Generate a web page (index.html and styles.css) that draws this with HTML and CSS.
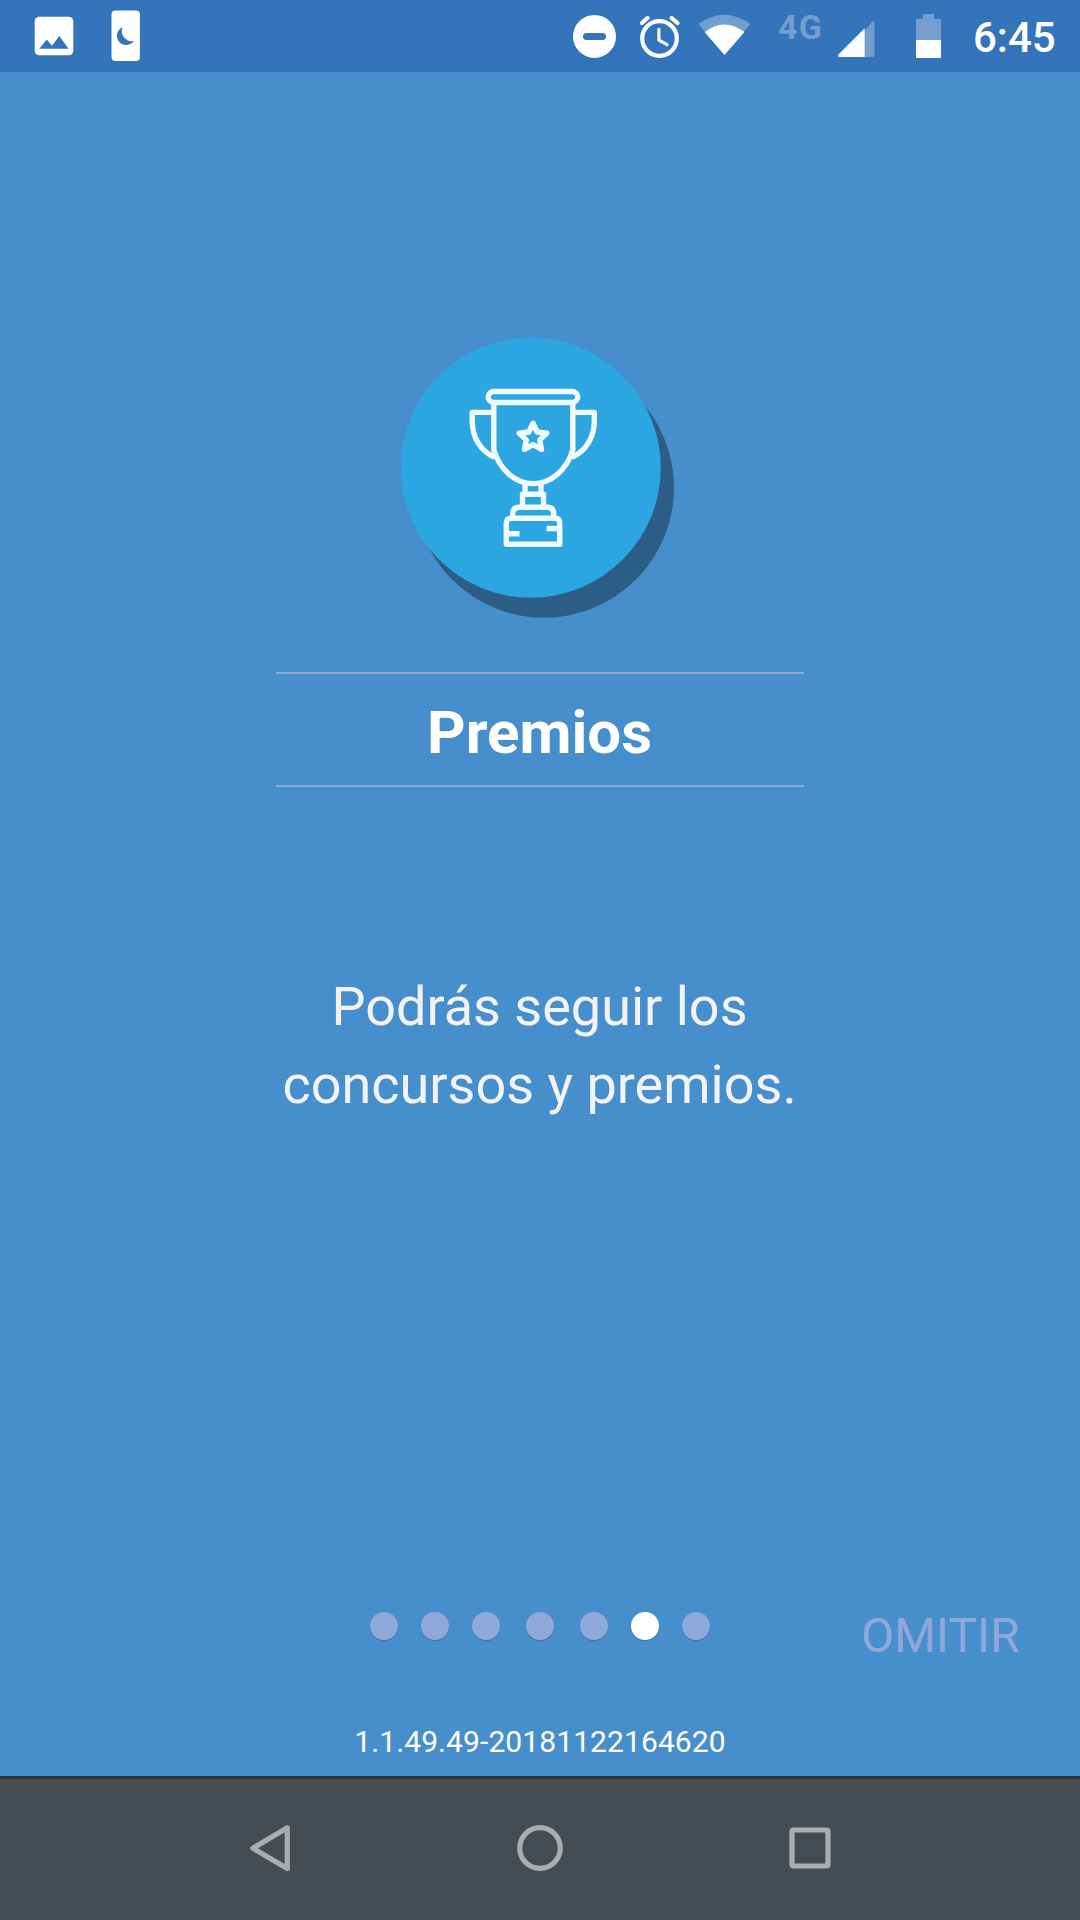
FILE: index.html
```html
<!DOCTYPE html>
<html lang="es">
<head>
<meta charset="utf-8">
<title>Premios</title>
<link rel="stylesheet" href="styles.css">
</head>
<body>
<div class="screen">
  <header class="status-bar">
    <div class="status-group">
      <svg width="48" height="72" viewBox="30 0 48 72">
        <rect x="34.7" y="16.7" width="38.6" height="38.6" rx="4.5" fill="#fff"/>
        <path d="M39.3 48.7 46.7 39.5 52 45.7 59.3 36 68.7 48.7Z" fill="#3474ba"/>
      </svg>
      <svg width="48" height="72" viewBox="102 0 48 72">
        <rect x="111.5" y="10.5" width="28.4" height="50.4" rx="4" fill="#fff"/>
        <path d="M122.6 27.3A9.2 9.2 0 1 0 133.8 40.9 10 10 0 0 1 122.6 27.3Z" fill="#3474ba"/>
      </svg>
    </div>
    <div class="status-group status-group-right">
      <svg width="60" height="72" viewBox="565 0 60 72">
        <circle cx="594.5" cy="36.4" r="21.5" fill="#fff"/>
        <rect x="583" y="33" width="23" height="7" rx="3.5" fill="#3474ba"/>
      </svg>
      <svg width="65" height="72" viewBox="625 0 65 72" fill="none" stroke="#fff" stroke-width="4.2" stroke-linecap="round" stroke-linejoin="round">
        <circle cx="659.5" cy="38.5" r="17.3"/>
        <path d="M641.9 23 647.5 18M671.6 18 677.5 23"/>
        <path d="M658.9 29.3V40.2L667 44.7" stroke-width="3.1"/>
      </svg>
      <svg width="89" height="72" viewBox="690 0 89 72" stroke-linejoin="round">
        <path d="M724.5 53.5 700 24.2Q724.5 7.5 749 24.2Z" fill="#739ecf" stroke="#739ecf" stroke-width="2"/>
        <path d="M724.5 53.8 705.8 32.2Q724.5 18.5 743.2 32.2Z" fill="#fff" stroke="#fff" stroke-width="1.6"/>
      </svg>
      <span class="network">4G</span>
      <svg width="60" height="72" viewBox="830 0 60 72">
        <path d="M864.7 30.7 872 22Q874.5 20 874.5 23V55Q874.5 57 872.5 57H864.7Z" fill="#739ecf"/>
        <path d="M864.7 28.3V57H840Q836.8 57 838.7 54.3Z" fill="#fff"/>
      </svg>
      <svg width="85" height="72" viewBox="890 0 85 72">
        <path d="M916 19H923V14H934V19H941V40H916Z" fill="#739ecf"/>
        <path d="M916 40H941V58H916Z" fill="#fff"/>
      </svg>
      <span class="clock">6:45</span>
    </div>
  </header>

  <main class="slide">
    <svg class="badge" width="280" height="288" viewBox="398 334 280 288">
      <circle cx="544" cy="487.7" r="130" fill="#2d5e87"/>
      <circle cx="530.8" cy="467.7" r="130" fill="#2ba6e0"/>
      <g fill="none" stroke="#f1faff" stroke-width="5.4" stroke-linejoin="round">
        <rect x="488.3" y="391.5" width="89.4" height="11" rx="5.5"/>
        <path d="M493.8 402.5V450C500 470 515 483.3 533.2 483.6 551.4 483.3 566.6 470 572.8 450V402.5"/>
        <path d="M493.8 412.4H472.2V421C472.2 437 480.5 451.5 494.5 457.2M572.8 412.4H594.3V421C594.3 437 586 451.5 572 457.2"/>
        <path d="M533 423.2 537.1 432 546.8 433.2 539.7 439.9 541.5 449.4 533 444.7 524.5 449.4 526.3 439.9 519.2 433.2 528.9 432Z"/>
        <path d="M525 484V494.3M541 484V494.3M522.5 507V494.3H543.5V507"/>
        <path d="M512.7 518V514Q512.7 507.3 519.5 507.3H547Q553.7 507.3 553.7 514V518"/>
        <path d="M506.3 544.3V523Q506.3 518.3 511 518.3H555Q559.7 518.3 559.7 523V544.3Z"/>
        <path d="M506.3 533.7H519.5M559.7 528.5H546.5"/>
      </g>
    </svg>
    <h1 class="title">Premios</h1>
    <p class="description">Podrás seguir los<br>concursos y premios.</p>
  </main>

  <footer class="pager">
    <div class="dots">
      <i class="dot"></i><i class="dot"></i><i class="dot"></i><i class="dot dot-middle"></i><i class="dot"></i><i class="dot dot-active"></i><i class="dot"></i>
    </div>
    <span class="skip">OMITIR</span>
  </footer>
  <div class="version">1.1.49.49-20181122164620</div>

  <nav class="nav-bar">
    <svg width="60" height="60" viewBox="240 1818 60 60"><path d="M252.8 1848.2 287.3 1827.8V1868.6Z"/></svg>
    <svg width="60" height="60" viewBox="510 1818 60 60"><circle cx="540" cy="1848" r="20.3"/></svg>
    <svg width="60" height="60" viewBox="780 1818 60 60"><rect x="792" y="1830" width="36" height="36" rx="1.5"/></svg>
  </nav>
</div>
</body>
</html>
```
FILE: styles.css
```css
body {
  margin: 0;
  background: #478ecc;
  font-family: Roboto, "Liberation Sans", sans-serif;
}

.screen {
  width: 1080px;
  height: 1920px;
  display: flex;
  flex-direction: column;
  background: #478ecc;
  overflow: hidden;
}

svg {
  display: block;
  flex: none;
}

.status-bar {
  height: 72px;
  flex: none;
  display: flex;
  justify-content: space-between;
  padding-left: 30px;
  background: #3474ba;
  color: #fff;
}

.status-group {
  display: flex;
  gap: 24px;
}

.status-group-right {
  gap: 0;
  width: 515px;
}

.network {
  width: 52px;
  margin-left: -1px;
  flex: none;
  font-size: 34px;
  font-weight: 700;
  letter-spacing: 1.3px;
  line-height: 55px;
  color: #739ecf;
}

.clock {
  font-size: 42px;
  font-weight: 500;
  line-height: 76px;
  margin-left: -2px;
}

.slide {
  height: 1540px;
  flex: none;
  box-sizing: border-box;
  padding-top: 262px;
  display: flex;
  flex-direction: column;
  align-items: center;
}

.badge {
  margin-right: 4px;
}

.title {
  width: 528px;
  height: 111px;
  margin: 50px 0 0;
  border-top: 2px solid #90a7d9;
  border-bottom: 2px solid #90a7d9;
  font-size: 60px;
  font-weight: 700;
  line-height: 118px;
  text-align: center;
  text-indent: -1px;
  color: #fff;
}

.description {
  margin: 181px 1px 0 0;
  font-size: 54px;
  line-height: 78px;
  text-align: center;
  color: #f2f2f2;
}

.pager {
  height: 88px;
  flex: none;
  display: grid;
  grid-template-columns: 1fr auto 1fr;
}

.dots {
  grid-column: 2;
  display: flex;
  gap: 23px;
}

.dot {
  width: 28px;
  height: 28px;
  border-radius: 50%;
  background: #90a7d9;
  box-shadow: 0 1px 1px rgba(0, 0, 0, 0.2);
}

.dot-middle {
  margin: 0 3px;
}

.dot-active {
  background: #fff;
}

.skip {
  justify-self: end;
  margin-right: 60.5px;
  font-size: 48px;
  line-height: 48px;
  color: #90a7d9;
}

.version {
  height: 76px;
  flex: none;
  font-size: 30px;
  letter-spacing: 0.09px;
  line-height: 83px;
  text-align: center;
  color: #fff;
}

.nav-bar {
  height: 144px;
  flex: none;
  box-sizing: border-box;
  border-top: 3px solid #2e3436;
  padding-top: 39px;
  display: flex;
  justify-content: center;
  gap: 210px;
  background: #454d53;
}

.nav-bar svg {
  fill: none;
  stroke: #a9adb0;
  stroke-width: 5.2;
  stroke-linejoin: round;
}
```
